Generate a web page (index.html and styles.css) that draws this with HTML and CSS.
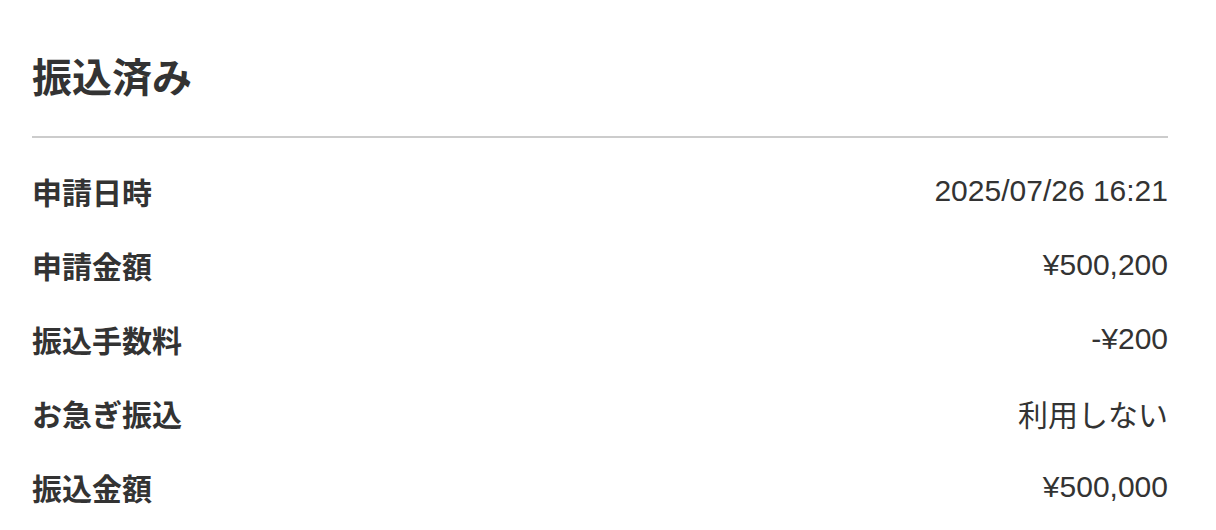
FILE: index.html
```html
<!DOCTYPE html>
<html lang="ja">
<head>
  <meta charset="UTF-8" />
  <meta name="viewport" content="width=device-width, initial-scale=1.0"/>
  <title>振込済み</title>
  <link rel="stylesheet" href="styles.css">
</head>
<body>
  <div class="container">
    <h1 class="status-title">振込済み</h1>

    <div class="detail-list">
      <div class="detail-row">
        <span class="detail-label">申請日時</span>
        <span class="detail-value">2025/07/26 16:21</span>
      </div>
      <div class="detail-row">
        <span class="detail-label">申請金額</span>
        <span class="detail-value">¥500,200</span>
      </div>
      <div class="detail-row">
        <span class="detail-label">振込手数料</span>
        <span class="detail-value">-¥200</span>
      </div>
      <div class="detail-row">
        <span class="detail-label">お急ぎ振込</span>
        <span class="detail-value">利用しない</span>
      </div>
      <div class="detail-row">
        <span class="detail-label">振込金額</span>
        <span class="detail-value">¥500,000</span>
      </div>
    </div>
  </div>
</body>
</html>
```

FILE: styles.css
```css
body, html {
  margin: 0;
  padding: 0;
  background: #ffffff;
  color: #333333;
  font-family: 'Liberation Sans', 'Noto Sans CJK JP', sans-serif;
}

.container {
  padding: 48px 48px 0 32px;
}

.status-title {
  margin: 0;
  font-size: 40px;
  line-height: 60px;
  font-weight: 700;
  padding-bottom: 28px;
  border-bottom: 2px solid #cccccc;
}

.detail-list {
  padding-top: 16px;
}

.detail-row {
  display: flex;
  justify-content: space-between;
  align-items: center;
  height: 74px;
  font-size: 30px;
}

.detail-label {
  font-weight: 700;
}

.detail-value {
  font-weight: 400;
}
```
